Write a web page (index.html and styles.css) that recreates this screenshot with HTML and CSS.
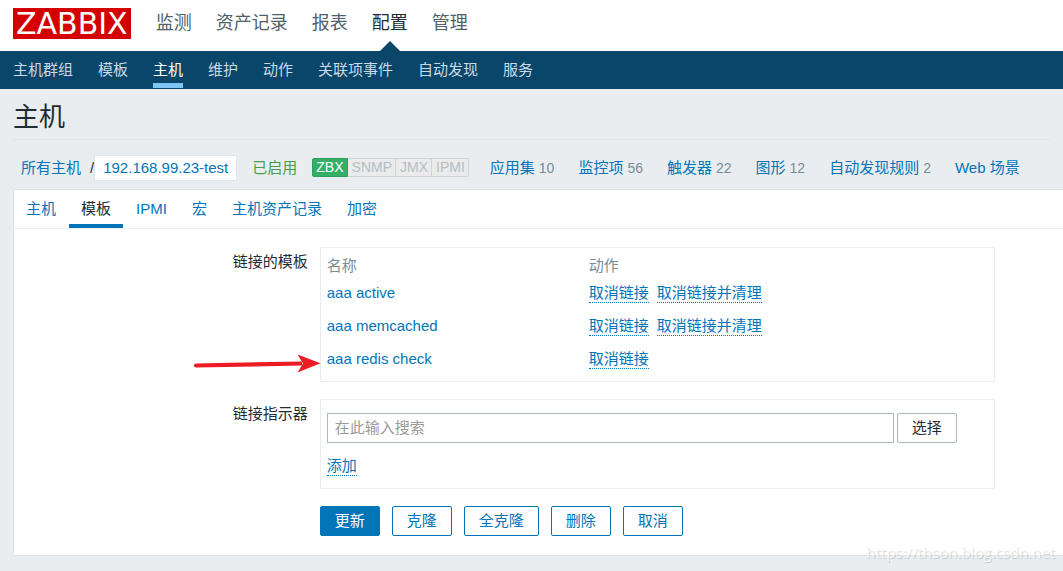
FILE: index.html
```html
<!DOCTYPE html>
<html lang="zh-CN">
<head>
<meta charset="utf-8">
<title>主机</title>
<link rel="stylesheet" href="styles.css">
</head>
<body>
<header class="top">
  <a class="logo" href="#">ZABBIX</a>
  <nav class="main-nav">
    <a href="#">监测</a>
    <a href="#">资产记录</a>
    <a href="#">报表</a>
    <a href="#" class="current">配置</a>
    <a href="#">管理</a>
  </nav>
</header>
<nav class="sub-nav">
  <a href="#">主机群组</a>
  <a href="#">模板</a>
  <a href="#" class="current">主机</a>
  <a href="#">维护</a>
  <a href="#">动作</a>
  <a href="#">关联项事件</a>
  <a href="#">自动发现</a>
  <a href="#">服务</a>
</nav>
<main class="page">
  <h1 class="title">主机</h1>
  <div class="crumbs">
    <a href="#">所有主机</a>
    <span class="slash">/</span>
    <a class="host" href="#">192.168.99.23-test</a>
    <span class="enabled">已启用</span>
    <div class="badges"><span class="on">ZBX</span><span>SNMP</span><span>JMX</span><span>IPMI</span></div>
    <div class="counts">
      <span class="count"><a href="#">应用集</a><span class="num">10</span></span>
      <span class="count"><a href="#">监控项</a><span class="num">56</span></span>
      <span class="count"><a href="#">触发器</a><span class="num">22</span></span>
      <span class="count"><a href="#">图形</a><span class="num">12</span></span>
      <span class="count"><a href="#">自动发现规则</a><span class="num">2</span></span>
      <span class="count"><a href="#">Web 场景</a></span>
    </div>
  </div>
  <section class="panel">
    <nav class="tabs">
      <a href="#">主机</a>
      <a href="#" class="current">模板</a>
      <a href="#">IPMI</a>
      <a href="#">宏</a>
      <a href="#">主机资产记录</a>
      <a href="#">加密</a>
    </nav>
    <form class="form">
      <span class="label" id="linked">链接的模板</span>
      <div class="box linked-box">
        <table class="templates" aria-labelledby="linked">
          <thead><tr><th>名称</th><th>动作</th></tr></thead>
          <tbody>
            <tr><td><a href="#">aaa active</a></td><td><button type="button" class="link">取消链接</button><button type="button" class="link">取消链接并清理</button></td></tr>
            <tr><td><a href="#">aaa memcached</a></td><td><button type="button" class="link">取消链接</button><button type="button" class="link">取消链接并清理</button></td></tr>
            <tr><td><a href="#">aaa redis check</a></td><td><button type="button" class="link">取消链接</button></td></tr>
          </tbody>
        </table>
        <svg class="arrow" width="128" height="20" viewBox="0 0 128 20" aria-hidden="true">
          <path d="M3 9.400 L109 7.400 V11.600 L3 13.600 A2.100 2.100 0 0 1 3 9.400Z" fill="#ed1c24"/>
          <path d="M104.500 0.500 L127.500 9.300 L104.500 18.500 L110 9.500Z" fill="#ed1c24"/>
        </svg>
      </div>
      <label class="label" for="search">链接指示器</label>
      <div class="box search-box">
        <div class="search-row">
          <input id="search" type="text" placeholder="在此输入搜索">
          <button type="button" class="btn grey">选择</button>
        </div>
        <button type="button" class="link">添加</button>
      </div>
      <div class="actions">
        <button type="button" class="btn primary">更新</button>
        <button type="button" class="btn">克隆</button>
        <button type="button" class="btn">全克隆</button>
        <button type="button" class="btn">删除</button>
        <button type="button" class="btn">取消</button>
      </div>
    </form>
  </section>
</main>
<div class="watermark">https://thson.blog.csdn.net</div>
</body>
</html>
```

FILE: styles.css
```css
* { box-sizing: border-box; }

body {
  margin: 0;
  min-height: 100vh;
  position: relative;
  overflow-x: hidden;
  background: #e9edf0;
  color: #1f2c33;
  font: 15px/20px "Liberation Sans", "Noto Sans CJK SC", sans-serif;
}

a { color: #0275b8; text-decoration: none; white-space: nowrap; }
button, input { font: inherit; margin: 0; }

.top {
  display: flex;
  align-items: flex-start;
  gap: 25px;
  height: 51px;
  padding: 8px 13px 0;
  background: #fff;
}
.logo {
  padding: 0 3px;
  background: #d40000;
  color: #fff;
  font: 30px/31px "DejaVu Sans", sans-serif;
}
.main-nav { display: flex; gap: 24px; align-self: stretch; font-size: 18px; line-height: 31px; }
.main-nav a { color: #50606b; position: relative; }
.main-nav .current { color: #1f2c33; }
.main-nav .current::after {
  content: "";
  position: absolute;
  left: 50%;
  top: 33px;
  margin-left: -10px;
  border: 10px solid transparent;
  border-top: 0;
  border-bottom-color: #0a466a;
}

.sub-nav { display: flex; gap: 25px; height: 38px; padding: 0 13px; background: #0a466a; }
.sub-nav a { height: 37px; line-height: 37px; color: #c8dbe6; }
.sub-nav .current { color: #fff; border-bottom: 5px solid #7fc4f2; }

.page { padding-left: 13px; }
.title {
  margin: 0 13px 0 0;
  padding: 13px 0 7px;
  border-bottom: 1px solid #dfe4e7;
  font-size: 26px;
  font-weight: 400;
  line-height: 30px;
}

.crumbs { display: flex; align-items: center; height: 49px; padding: 6px 0 0 8px; white-space: nowrap; }
.slash { margin-left: 9px; }
.host { padding: 2px 8px; background: #fff; border: 1px solid #dfe4e7; border-radius: 2px; }
.enabled { margin: 0 15px; color: #429e47; }
.badges { display: flex; font-size: 14px; line-height: 17px; color: #b4bfc5; }
.badges span { padding: 0 3px 0 4px; background: #ebebeb; border: 1px solid #ccd5d9; border-left-width: 0; }
.badges span:last-child { border-radius: 0 2px 2px 0; }
.badges .on { padding: 0 3px; background: #34af67; border: 1px solid #2f9f5e; color: #fff; border-radius: 2px 0 0 2px; }
.counts { display: flex; gap: 24px; margin-left: 21px; }
.count { display: flex; align-items: baseline; gap: 4px; }
.num { font-size: 14px; color: #768d99; }

.panel { background: #fff; border: 1px solid #dfe4e7; border-right: 0; }
.tabs { display: flex; gap: 1px; height: 39px; padding-left: 0; border-bottom: 1px solid #ebeef0; }
.tabs a { padding: 0 12px; line-height: 38px; }
.tabs .current { color: #1f2c33; border-bottom: 4px solid #0275b8; }

.form {
  display: grid;
  grid-template-columns: 28% minmax(0, 675px);
  column-gap: 12px;
  row-gap: 17px;
  padding: 18px 0 19px;
}
.label { text-align: right; padding-top: 5px; }
.box { position: relative; border: 1px solid #ebeef0; padding: 7px 6px 6px; }
.templates { width: 100%; border-collapse: collapse; table-layout: fixed; }
.templates th, .templates td { padding: 0; text-align: left; }
.templates th { height: 21px; font-weight: 400; color: #768d99; }
.templates th:first-child { width: 262px; }
.templates td { height: 33px; }
.link {
  height: 20px;
  padding: 0;
  border: 0;
  border-bottom: 1px dotted #0275b8;
  background: none;
  color: #0275b8;
  line-height: 19px;
  cursor: pointer;
}
.link + .link { margin-left: 8px; }
.arrow { position: absolute; right: 100%; bottom: 7px; }

.search-box { padding: 13px 6px 12px; }
.search-row { display: flex; gap: 3px; padding-right: 31px; margin-bottom: 13px; }
.search-row input {
  flex: 1;
  min-width: 0;
  height: 30px;
  padding: 0 7px 2px;
  border: 1px solid #acbbc2;
  background: #fff;
  color: #1f2c33;
}
.search-row input::placeholder { color: #9b9b9b; opacity: 1; }

.btn {
  height: 30px;
  padding: 0 14px;
  border: 1px solid #0275b8;
  border-radius: 2px;
  background: #fff;
  color: #0275b8;
  line-height: 28px;
  cursor: pointer;
}
.btn.primary { background: #0275b8; color: #fff; }
.btn.grey { border-color: #acbbc2; color: #1f2c33; }
.actions { grid-column: 2; display: flex; gap: 12px; }

.watermark {
  position: absolute;
  right: 8px;
  bottom: 9px;
  color: rgba(255, 255, 255, 0.7);
  font: 15px/20px "Open Sans", sans-serif;
  text-shadow: 1px 1px 1px rgba(0, 0, 0, 0.16);
}
```
